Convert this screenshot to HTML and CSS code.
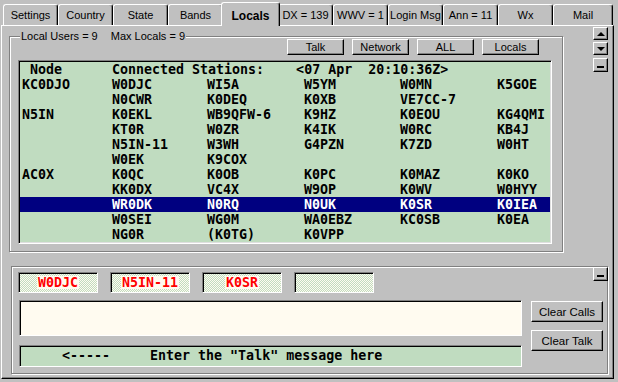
FILE: index.html
```html
<!DOCTYPE html>
<html lang="en">
<head>
    <meta charset="UTF-8">
    <meta name="viewport" content="width=device-width, initial-scale=1.0">
    <title>Locals</title>
    <link rel="stylesheet" href="styles.css">
</head>
<body>
<div class="app">

    <div class="tabs">
        <div class="tab">Settings</div>
        <div class="tab">Country</div>
        <div class="tab">State</div>
        <div class="tab">Bands</div>
        <div class="tab active">Locals</div>
        <div class="tab">DX = 139</div>
        <div class="tab">WWV = 1</div>
        <div class="tab">Login Msg</div>
        <div class="tab">Ann = 11</div>
        <div class="tab">Wx</div>
        <div class="tab last">Mail</div>
    </div>

    <div class="page">
        <div class="top">
            <div class="group">
                <div class="group-head">
                    <div class="legend"><span>Local Users = 9</span><span>Max Locals = 9</span></div>
                    <div class="filters">
                        <button class="btn">Talk</button>
                        <button class="btn">Network</button>
                        <button class="btn">ALL</button>
                        <button class="btn">Locals</button>
                    </div>
                </div>

                <div class="list">
                    <div class="row"><span> Node</span><span class="wide">Connected Stations:    &lt;07 Apr  20:10:36Z&gt;</span></div>
                    <div class="row"><span>KC0DJO</span><span>W0DJC</span><span>WI5A</span><span>W5YM</span><span>W0MN</span><span>K5GOE</span></div>
                    <div class="row"><span></span><span>N0CWR</span><span>K0DEQ</span><span>K0XB</span><span>VE7CC-7</span></div>
                    <div class="row"><span>N5IN</span><span>K0EKL</span><span>WB9QFW-6</span><span>K9HZ</span><span>K0EOU</span><span>KG4QMI</span></div>
                    <div class="row"><span></span><span>KT0R</span><span>W0ZR</span><span>K4IK</span><span>W0RC</span><span>KB4J</span></div>
                    <div class="row"><span></span><span>N5IN-11</span><span>W3WH</span><span>G4PZN</span><span>K7ZD</span><span>W0HT</span></div>
                    <div class="row"><span></span><span>W0EK</span><span>K9COX</span></div>
                    <div class="row"><span>AC0X</span><span>K0QC</span><span>K0OB</span><span>K0PC</span><span>K0MAZ</span><span>K0KO</span></div>
                    <div class="row"><span></span><span>KK0DX</span><span>VC4X</span><span>W9OP</span><span>K0WV</span><span>W0HYY</span></div>
                    <div class="row sel"><span></span><span>WR0DK</span><span>N0RQ</span><span>N0UK</span><span>K0SR</span><span>K0IEA</span></div>
                    <div class="row"><span></span><span>W0SEI</span><span>WG0M</span><span>WA0EBZ</span><span>KC0SB</span><span>K0EA</span></div>
                    <div class="row"><span></span><span>NG0R</span><span>(K0TG)</span><span>K0VPP</span></div>
                </div>
            </div>

            <div class="side">
                <button class="sbtn"><span class="arrow-up"></span></button>
                <button class="sbtn down"><span class="arrow-down"></span></button>
                <button class="sbtn minus"><span class="bar"></span></button>
            </div>
        </div>

        <div class="talk">
            <button class="sbtn corner"><span class="bar"></span></button>

            <div class="calls">
                <div class="call"><span>W0DJC</span></div>
                <div class="call"><span>N5IN-11</span></div>
                <div class="call"><span>K0SR</span></div>
                <div class="call empty"></div>
            </div>

            <div class="talk-main">
                <div class="talk-left">
                    <div class="talk-log"></div>
                    <div class="talk-input">&lt;-----     Enter the "Talk" message here</div>
                </div>
                <div class="talk-btns">
                    <button class="btn big">Clear Calls</button>
                    <button class="btn big">Clear Talk</button>
                </div>
            </div>
        </div>
    </div>

</div>
</body>
</html>
```

FILE: styles.css
```css
body {
    margin: 0;
    background-color: #c0c0c0;
    font-family: "Liberation Sans", Arial, sans-serif;
    font-size: 11px;
    color: #000;
}

.app {
    width: 618px;
    height: 382px;
    overflow: hidden;
}

/* tab strip */
.tabs {
    display: flex;
    align-items: flex-end;
    height: 25px;
    padding-left: 3px;
}

.tab {
    flex: 0 0 55px;
    box-sizing: border-box;
    height: 21px;
    display: flex;
    align-items: center;
    justify-content: center;
    border-top: 1px solid #fff;
    border-left: 1px solid #fff;
    border-right: 1px solid #000;
    border-radius: 3px 3px 0 0;
    box-shadow: inset -1px 0 0 #808080;
    white-space: nowrap;
}

.tab.last {
    flex-basis: 60px;
}

.tab.active {
    flex-basis: 59px;
    height: 24px;
    margin: 0 -2px -1px;
    padding-top: 2px;
    position: relative;
    z-index: 1;
    background-color: #c0c0c0;
    font-weight: bold;
    font-size: 12px;
}

.page {
    box-sizing: border-box;
    width: 613px;
    height: 354px;
    margin-left: 1px;
    border: 1px solid;
    border-color: #fff #000 #000 #fff;
    box-shadow: inset -1px -1px 0 #808080;
}

/* top group */
.top {
    display: flex;
    align-items: flex-start;
}

.group {
    box-sizing: border-box;
    width: 554px;
    height: 216px;
    margin: 10px 0 0 7px;
    padding: 0 10px 7px 8px;
    border: 1px solid #808080;
    box-shadow: inset 1px 1px 0 #fff, 1px 1px 0 #fff;
    display: flex;
    flex-direction: column;
}

.group-head {
    display: flex;
    align-items: flex-start;
}

.legend {
    display: flex;
    gap: 13px;
    margin: -7px 0 0 2px;
    padding: 0 1px;
    line-height: 13px;
    background-color: #c0c0c0;
    white-space: nowrap;
}

.filters {
    display: flex;
    gap: 8px;
    margin: 2px 13px 0 auto;
}

.btn {
    box-sizing: border-box;
    width: 57px;
    height: 16px;
    padding: 0;
    font-family: "Liberation Sans", Arial, sans-serif;
    font-size: 11px;
    color: #000;
    background-color: #c0c0c0;
    border: 1px solid;
    border-color: #fff #000 #000 #fff;
    box-shadow: inset -1px -1px 0 #808080;
}

.list {
    box-sizing: border-box;
    height: 184px;
    margin-top: 5px;
    padding: 1px;
    border: 1px solid;
    border-color: #808080 #fff #fff #808080;
    box-shadow: inset 1px 1px 0 #000, inset -1px -1px 0 #dfdfdf;
    background-color: #c0dcc0;
    font-family: "DejaVu Sans Mono", monospace;
    font-weight: bold;
    font-size: 13.3px;
}

.row {
    display: grid;
    grid-template-columns: 90px 95px 97px 96px 97px 1fr;
    height: 15px;
    line-height: 15px;
    padding-left: 2px;
    white-space: pre;
}

.row .wide {
    grid-column: 2 / -1;
}

.row.sel {
    background-color: #000080;
    color: #fff;
}

/* small square buttons */
.side {
    display: flex;
    flex-direction: column;
    margin: 1px 0 0 30px;
}

.sbtn {
    box-sizing: border-box;
    width: 15px;
    height: 13px;
    padding: 0;
    display: flex;
    align-items: center;
    justify-content: center;
    background-color: #c0c0c0;
    border: 1px solid;
    border-color: #fff #000 #000 #fff;
    box-shadow: inset -1px -1px 0 #808080;
}

.sbtn.down {
    margin-top: 2px;
}

.sbtn.minus {
    height: 14px;
    margin-top: 3px;
}

.arrow-up {
    width: 0;
    height: 0;
    border-left: 4px solid transparent;
    border-right: 4px solid transparent;
    border-bottom: 4px solid #000;
}

.arrow-down {
    width: 0;
    height: 0;
    border-left: 4px solid transparent;
    border-right: 4px solid transparent;
    border-top: 4px solid #000;
}

.bar {
    width: 7px;
    height: 2px;
    margin-top: 4px;
    background-color: #000;
}

/* talk panel */
.talk {
    position: relative;
    box-sizing: border-box;
    width: 597px;
    height: 108px;
    margin: 14px 0 0 9px;
    padding: 5px 0 6px 6px;
    border: 1px solid #808080;
    box-shadow: inset 1px 1px 0 #fff, 1px 1px 0 #fff;
}

.sbtn.corner {
    position: absolute;
    top: 0;
    right: -1px;
    height: 14px;
}

.calls {
    display: flex;
    gap: 12px;
}

.call {
    box-sizing: border-box;
    width: 80px;
    height: 21px;
    display: flex;
    align-items: center;
    justify-content: center;
    border: 1px solid;
    border-color: #808080 #fff #fff #808080;
    box-shadow: inset 1px 1px 0 #000;
    background-color: #fffbf0;
    background-image: repeating-conic-gradient(#c0dcc0 0 25%, #fffbf0 0 50%);
    background-size: 2px 2px;
    color: #ff0000;
    font-family: "DejaVu Sans Mono", monospace;
    font-weight: bold;
    font-size: 13.3px;
}

.call span {
    padding: 0 1px;
    line-height: 13px;
    background-color: #fffbf0;
}

.talk-main {
    display: flex;
    margin-top: 7px;
}

.talk-left {
    display: flex;
    flex-direction: column;
    width: 503px;
    margin-left: 1px;
}

.talk-log {
    box-sizing: border-box;
    height: 36px;
    border: 1px solid;
    border-color: #808080 #fff #fff #808080;
    box-shadow: inset 1px 1px 0 #000;
    background-color: #fffbf0;
}

.talk-input {
    box-sizing: border-box;
    height: 22px;
    margin-top: 9px;
    padding-left: 42px;
    line-height: 20px;
    border: 1px solid;
    border-color: #808080 #fff #fff #808080;
    box-shadow: inset 1px 1px 0 #000;
    background-color: #c0dcc0;
    font-family: "DejaVu Sans Mono", monospace;
    font-weight: bold;
    font-size: 13.3px;
    white-space: pre;
}

.talk-btns {
    display: flex;
    flex-direction: column;
    gap: 8px;
    margin: 1px 0 0 9px;
}

.btn.big {
    width: 72px;
    height: 21px;
    font-size: 11.5px;
}
```
